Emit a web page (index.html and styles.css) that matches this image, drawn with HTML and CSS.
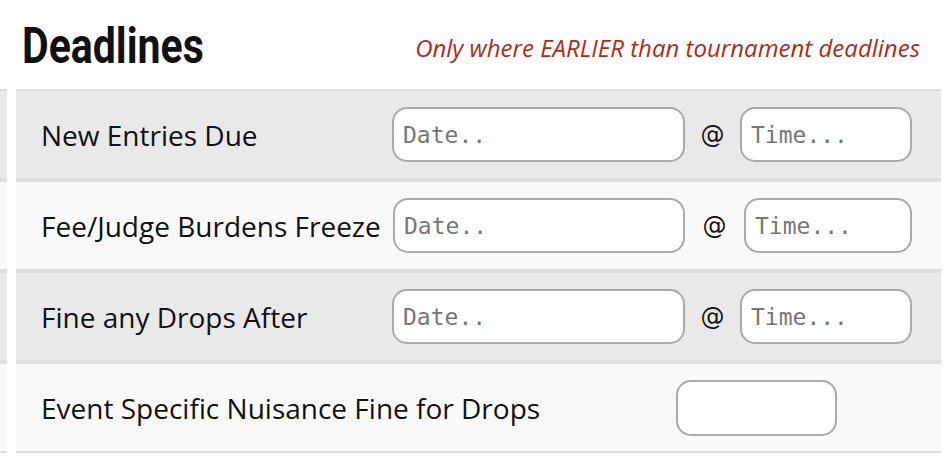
FILE: index.html
```html
<!DOCTYPE html>
<html lang="en">
<head>
<meta charset="utf-8">
<title>Deadlines</title>
<link rel="stylesheet" href="styles.css">
</head>
<body>
<div class="page">
  <header class="head">
    <h1 class="title">Deadlines</h1>
    <p class="note">Only where EARLIER than tournament deadlines</p>
  </header>
  <div class="rows">
    <div class="row row--shade">
      <div class="stub"></div>
      <div class="cells">
        <span class="label">New Entries Due</span>
        <input class="field field--date" type="text" placeholder="Date..">
        <span class="at">@</span>
        <input class="field field--time" type="text" placeholder="Time...">
      </div>
    </div>
    <div class="row">
      <div class="stub"></div>
      <div class="cells cells--wide">
        <span class="label">Fee/Judge Burdens Freeze</span>
        <input class="field field--date" type="text" placeholder="Date..">
        <span class="at">@</span>
        <input class="field field--time" type="text" placeholder="Time...">
      </div>
    </div>
    <div class="row row--shade">
      <div class="stub"></div>
      <div class="cells">
        <span class="label">Fine any Drops After</span>
        <input class="field field--date" type="text" placeholder="Date..">
        <span class="at">@</span>
        <input class="field field--time" type="text" placeholder="Time...">
      </div>
    </div>
    <div class="row">
      <div class="stub"></div>
      <div class="cells">
        <span class="label label--long">Event Specific Nuisance Fine for Drops</span>
        <input class="field field--fine" type="text">
      </div>
    </div>
  </div>
</div>
</body>
</html>
```

FILE: styles.css
```css
* {
  box-sizing: border-box;
}

body {
  margin: 0;
  background: #ffffff;
  font-family: "Open Sans", "Noto Sans", sans-serif;
  color: #111111;
}

.page {
  width: 950px;
  height: 458px;
  overflow: hidden;
}

.head {
  display: flex;
  align-items: flex-start;
  justify-content: space-between;
  height: 89px;
  margin-left: 16px;
  margin-right: 9px;
  padding: 21px 21px 0 6px;
}

.title {
  margin: 0;
  display: inline-block;
  font-family: "Roboto", "Liberation Sans", sans-serif;
  font-weight: 700;
  font-size: 50px;
  line-height: 1;
  color: #111111;
  transform: scaleX(0.82);
  transform-origin: left center;
}

.note {
  margin: 15px 0 0;
  font-family: "Open Sans", "Noto Sans", sans-serif;
  font-style: italic;
  font-size: 24px;
  line-height: 1;
  color: #b02a17;
}

.row {
  display: flex;
  gap: 9px;
  margin-right: 9px;
}

.stub {
  width: 7px;
  flex: 0 0 7px;
  border-top: 2px solid #dedede;
  border-bottom: 2px solid #dedede;
  background: #f9f9f9;
}

.cells {
  flex: 1;
  display: flex;
  align-items: center;
  height: 91px;
  padding: 0 29px 0 25px;
  border-top: 2px solid #dedede;
  border-bottom: 2px solid #dedede;
  background: #f9f9f9;
}

.row--shade .cells,
.row--shade .stub {
  background: #e9e9e9;
}

.label {
  flex: 0 0 351px;
  font-size: 28px;
  line-height: 1;
  white-space: nowrap;
}

.label--long {
  flex-basis: 635px;
}

.cells--wide .label {
  flex-basis: 352px;
}

.field {
  height: 55px;
  padding: 0 9px;
  border: 2px solid #aaaaaa;
  border-radius: 15px;
  background: #ffffff;
  font-family: "DejaVu Sans Mono", "Liberation Mono", monospace;
  font-size: 23px;
  color: #222222;
  outline: none;
}

.field::placeholder {
  color: #777777;
}

.field--date {
  width: 293px;
}

.cells--wide .field--date {
  width: 292px;
}

.field--time {
  width: 172px;
}

.cells--wide .field--time {
  width: 168px;
}

.field--fine {
  width: 161px;
  height: 56px;
}

.at {
  flex: 1;
  text-align: center;
  font-family: "DejaVu Sans", "Open Sans", sans-serif;
  font-size: 24px;
  line-height: 1;
  color: #111111;
}
```
